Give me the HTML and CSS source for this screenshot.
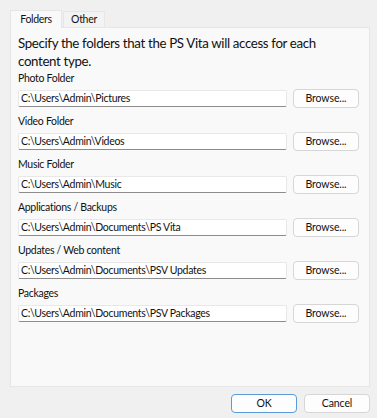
FILE: index.html
```html
<!DOCTYPE html>
<html>
<head>
<meta charset="utf-8">
<link rel="stylesheet" href="styles.css">
</head>
<body>
<div class="dialog">
  <div class="tabs">
    <div class="tab active">Folders</div>
    <div class="tab">Other</div>
  </div>
  <div class="panel">
    <p class="intro">Specify the folders that the PS Vita will access for each content type.</p>
    <div class="field">
      <div class="label">Photo Folder</div>
      <div class="row"><div class="input">C:\Users\Admin\Pictures</div><button class="btn">Browse...</button></div>
    </div>
    <div class="field">
      <div class="label">Video Folder</div>
      <div class="row"><div class="input">C:\Users\Admin\Videos</div><button class="btn">Browse...</button></div>
    </div>
    <div class="field">
      <div class="label">Music Folder</div>
      <div class="row"><div class="input">C:\Users\Admin\Music</div><button class="btn">Browse...</button></div>
    </div>
    <div class="field">
      <div class="label">Applications / Backups</div>
      <div class="row"><div class="input">C:\Users\Admin\Documents\PS Vita</div><button class="btn">Browse...</button></div>
    </div>
    <div class="field">
      <div class="label">Updates / Web content</div>
      <div class="row"><div class="input">C:\Users\Admin\Documents\PSV Updates</div><button class="btn">Browse...</button></div>
    </div>
    <div class="field">
      <div class="label">Packages</div>
      <div class="row"><div class="input">C:\Users\Admin\Documents\PSV Packages</div><button class="btn">Browse...</button></div>
    </div>
  </div>
  <div class="footer">
    <button class="btn default">OK</button>
    <button class="btn">Cancel</button>
  </div>
</div>
</body>
</html>
```
FILE: styles.css
```css
html, body {
  margin: 0;
  padding: 0;
  background: #f0f0f0;
}
body {
  font-family: Lato, "Noto Sans", sans-serif;
  color: #111;
  font-size: 10.5px;
  letter-spacing: -0.3px;
}
.dialog {
  width: 377px;
  height: 418px;
  box-sizing: border-box;
  padding: 10px 7px 0 10px;
  display: flex;
  flex-direction: column;
}
.tabs {
  display: flex;
  align-items: flex-end;
  height: 17px;
}
.tab {
  box-sizing: border-box;
  height: 16px;
  line-height: 14px;
  margin-left: 1px;
  border: 1px solid #e6e6e6;
  border-bottom: none;
  background: #f3f3f3;
  width: 42px;
  text-align: center;
}
.tab.active {
  width: 52px;
  height: 18px;
  margin-left: 0;
  margin-bottom: -1px;
  line-height: 16px;
  background: #f9f9f9;
  position: relative;
  z-index: 1;
}
.panel {
  box-sizing: border-box;
  width: 360px;
  height: 360px;
  background: #f9f9f9;
  border: 1px solid #e6e6e6;
  padding: 6px 9px 0 7px;
  display: flex;
  flex-direction: column;
  gap: 6px;
}
.intro {
  margin: 0 0 -5px 0;
  max-width: 312px;
  font-size: 13.3px;
  letter-spacing: -0.35px;
  line-height: 18px;
}
.label {
  line-height: 15px;
  margin-bottom: 3px;
}
.row {
  display: flex;
  align-items: center;
  gap: 6px;
  height: 19px;
}
.input {
  box-sizing: border-box;
  width: 269px;
  height: 17px;
  background: #fff;
  border: 1px solid #e8e8e8;
  border-bottom: 1px solid #8c8c8c;
  border-radius: 2px;
  padding: 0 2px;
  line-height: 15px;
  white-space: nowrap;
  overflow: hidden;
}
.btn {
  box-sizing: border-box;
  width: 66px;
  height: 19px;
  padding: 0;
  font: inherit;
  letter-spacing: -0.1px;
  line-height: 17px;
  color: #111;
  background: #fdfdfd;
  border: 1px solid #d6d6d6;
  border-radius: 4px;
}
.footer {
  display: flex;
  justify-content: flex-end;
  gap: 7px;
  margin-top: 7px;
}
.btn.default {
  border-color: #5b9bd5;
}
```
